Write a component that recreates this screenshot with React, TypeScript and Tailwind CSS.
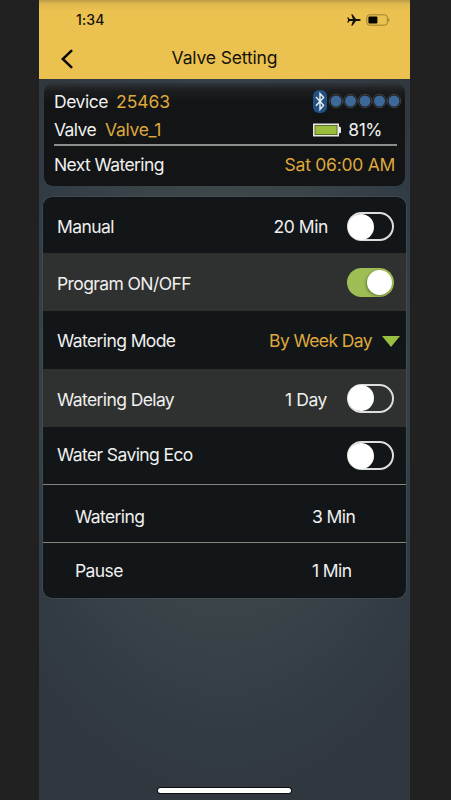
import React from 'react';
import { clsx } from 'clsx';

const Toggle: React.FC<{ on?: boolean; className?: string }> = ({ on, className }) => (
  <div
    className={clsx(
      'flex h-[29px] w-[47px] shrink-0 items-center rounded-full',
      on ? 'justify-end bg-[#9ebe55] pr-[2px]' : 'justify-start border-2 border-[#dededc]',
      className
    )}
  >
    <div
      className={clsx(
        'shrink-0 rounded-full bg-white',
        on ? 'h-[25px] w-[25px] shadow-[-1px_1px_3px_rgba(0,0,0,0.35)]' : '-ml-px h-[26px] w-[26px]'
      )}
    />
  </div>
);

const Plane: React.FC = () => (
  <svg width="14" height="12" viewBox="0 0 14 12" fill="#14110a">
    <path d="M13.7 6c0-.6-.8-.9-1.7-.9H9L5.5.3H4.2l1.7 4.8H2.6L1.2 3.3H.3L1.1 6l-.8 2.7h.9l1.4-1.8h3.3l-1.7 4.8h1.3L9 6.9h3c.9 0 1.7-.3 1.7-.9z" />
  </svg>
);

const PhoneBattery: React.FC = () => (
  <svg width="24" height="12" viewBox="0 0 24 12">
    <rect x="0.8" y="0.8" width="20.6" height="10.4" rx="2.8" fill="none" stroke="#9a8034" strokeWidth="1" />
    <rect x="2.4" y="2.4" width="9" height="7.2" rx="1" fill="#080600" />
    <path d="M22.4 4.2c1.3.7 1.3 2.9 0 3.6z" fill="#80692b" />
  </svg>
);

const Bluetooth: React.FC = () => (
  <svg width="14" height="23" viewBox="0 0 14 23">
    <rect width="14" height="23" rx="6" fill="#225181" />
    <path d="M3 7l7.6 8.2L7 19.3V3.6l3.6 4L3 15.8" fill="none" stroke="#e8edf3" strokeWidth="1.4" />
  </svg>
);

const SignalDots: React.FC = () => (
  <svg width="74" height="16" viewBox="0 0 74 16">
    {[0, 1, 2, 3, 4].map((dot) => (
      <g key={dot}>
        <circle cx={8 + dot * 14.5} cy="8" r="6.8" fill="#191c20" stroke="#434342" strokeWidth="0.9" />
        <circle cx={8 + dot * 14.5} cy="8" r="5.5" fill="#3c6999" />
      </g>
    ))}
  </svg>
);

const ValveBattery: React.FC = () => (
  <svg width="28" height="14" viewBox="0 0 28 14">
    <path d="M0 .5h26v3.2h1.2l.8 1v4.6l-.8 1H26v3.2H0z" fill="#e9e9e4" />
    <rect x="1.6" y="2" width="22.8" height="10" fill="#4e5b28" />
    <rect x="2.4" y="2.8" width="21.2" height="8.4" fill="#9abd3e" />
  </svg>
);

const App: React.FC = () => {
  return (
    <div className="flex h-[800px] w-[451px] overflow-hidden bg-[#212121] pl-[39px] font-['Inter','Liberation_Sans',sans-serif] text-[17.5px] leading-none tracking-[-0.6px] text-[#f0f0ee]">
      <div className="flex w-[371px] flex-col bg-[radial-gradient(ellipse_270px_420px_at_50%_48%,#435057_0%,#3c474a_45%,#323c45_80%,#31373e_100%)]">
        {/* Status bar and title */}
        <header className="h-[79px] bg-[linear-gradient(#b99b45_0px,#e0b74d_4px,#ebc250_11px)] text-[#16120a]">
          <div className="flex h-[40px] items-center justify-between pr-[20px] pl-[37px]">
            <span className="text-[14px] font-medium tracking-[0.15px]">1:34</span>
            <div className="flex items-center gap-[5px]">
              <Plane />
              <PhoneBattery />
            </div>
          </div>
          <div className="grid h-[37px] grid-cols-[40px_1fr_40px] items-center">
            <svg className="ml-[22px]" width="13" height="20" viewBox="0 0 13 20" fill="none">
              <path d="M10.3 1.8L1.8 10l8.5 8.2" stroke="#0c0900" strokeWidth="2.5" strokeLinecap="round" />
            </svg>
            <h1 className="-mt-px text-center tracking-[-0.15px]">Valve Setting</h1>
          </div>
        </header>

        {/* Device summary */}
        <section className="mx-[5px] mt-1 h-[103px] rounded-[9px] bg-[linear-gradient(#303438_0px,#1b1d1f_8px,#121416_20px)] px-[10px] pt-[3px]">
          <div className="-mr-[7px] flex h-[30px] items-center">
            <span className="pt-px tracking-[-0.45px]">Device</span>
            <span className="ml-[8px] pt-px tracking-[-0.1px] text-[#dfa83c]">25463</span>
            <div className="ml-auto flex items-center gap-px">
              <Bluetooth />
              <SignalDots />
            </div>
          </div>
          <div className="flex h-[28px] items-center">
            <span>Valve</span>
            <span className="ml-[9px] tracking-[-0.3px] text-[#dfa83c]">Valve_1</span>
            <div className="mr-[13px] ml-auto flex items-center gap-[7px]">
              <ValveBattery />
              <span className="tracking-[-0.5px]">81%</span>
            </div>
          </div>
          <div className="-mr-[2px] h-[1.5px] bg-[#8c8c8a]" />
          <div className="flex h-[38px] items-center justify-between pt-px">
            <span>Next Watering</span>
            <span className="tracking-[-0.26px] text-[#dfa83c]">Sat 06:00 AM</span>
          </div>
        </section>

        {/* Valve settings */}
        <section className="mx-1 mt-[11px] h-[401px] w-[363px] overflow-hidden rounded-[9px] bg-[#131619] shadow-[0_0_0_0.5px_#4c565d]">
          <div className="flex h-[56px] items-center pt-[3px] pr-[12px] pl-[14px]">
            <span>Manual</span>
            <span className="ml-auto tracking-[-0.4px]">20 Min</span>
            <Toggle className="ml-[19px]" />
          </div>
          <div className="flex h-[58px] items-center justify-between bg-[#2f3130] pr-[12px] pl-[14px]">
            <span className="pt-[3px]">Program ON/OFF</span>
            <Toggle on />
          </div>
          <div className="flex h-[58px] items-center pt-px pr-[6px] pl-[14px]">
            <span className="pt-px">Watering Mode</span>
            <span className="ml-auto pt-px text-[#dfa83c]">By Week Day</span>
            <svg className="mt-px ml-[10px]" width="18" height="11" viewBox="0 0 18 11">
              <path d="M0 0h18L9 11z" fill="#99bf40" />
            </svg>
          </div>
          <div className="flex h-[58px] items-center bg-[#2f3130] pr-[12px] pl-[14px]">
            <span className="pt-[4px]">Watering Delay</span>
            <span className="ml-auto pt-[4px] tracking-[-0.4px]">1 Day</span>
            <Toggle className="ml-[20px]" />
          </div>
          <div className="flex h-[58px] items-center justify-between border-b border-[#858580] pr-[12px] pl-[14px]">
            <span className="-mt-px">Water Saving Eco</span>
            <Toggle />
          </div>
          <div className="grid h-[58px] grid-cols-[237px_1fr] items-center border-b border-[#858580] pt-[6px] pl-[32px]">
            <span>Watering</span>
            <span>3 Min</span>
          </div>
          <div className="grid h-[55px] grid-cols-[237px_1fr] items-center pl-[32px]">
            <span>Pause</span>
            <span>1 Min</span>
          </div>
        </section>

        {/* Home indicator */}
        <div className="mx-auto mt-auto mb-[7px] h-[5px] w-[133px] rounded-full bg-white shadow-[0_0_0_1px_#0c0e10]" />
      </div>
    </div>
  );
};

export default App;
